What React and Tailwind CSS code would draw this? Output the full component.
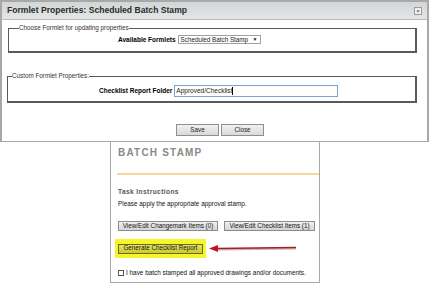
export default function App() {
    return (
        <div className="w-[429px] h-[283px] bg-white overflow-hidden font-['Liberation_Sans',Arial,sans-serif] text-black">
            {/* ventana de propiedades */}
            <div className="h-[142px] border-t-2 border-b border-x-2 border-[#a8a8a8] flex flex-col">
                <div className="h-[18px] shrink-0 bg-gradient-to-b from-[#d3d6d6] to-[#e3e6e6] border-b border-[#b9bcbc] flex items-center justify-between pl-[5px] pr-[5px]">
                    <span className="text-[8.6px] font-bold text-[#2b2b2b] leading-none">Formlet Properties: Scheduled Batch Stamp</span>
                    <span className="w-[8px] h-[8px] border border-[#9a9a9a] bg-[#f2f2f2] text-[6px] leading-[6px] text-center text-[#333]">×</span>
                </div>

                <div className="flex-1 pl-[5px] pr-[10px]">
                    <fieldset className="mt-[4px] ml-[1px] h-[29px] border border-[#5a5a5a] border-r-2 border-b-2 px-0">
                        <legend className="ml-[10px] text-[6.3px] leading-[8px] text-[#333]">Choose Formlet for updating properties</legend>
                        <div className="flex items-center pl-[109px] mt-[3px]">
                            <span className="text-[6.5px] font-bold mr-[2px]">Available Formlets</span>
                            <div className="w-[83px] h-[9px] border border-[#a0a0a0] flex items-center justify-between px-[2px] text-[6.3px] text-[#222]">
                                <span>Scheduled Batch Stamp</span>
                                <span className="text-[5px]">▼</span>
                            </div>
                        </div>
                    </fieldset>

                    <fieldset className="mt-[19px] h-[31px] border border-[#5a5a5a] border-r-2 border-b-2 px-0">
                        <legend className="ml-[4px] text-[6.3px] leading-[8px] text-[#333]">Custom Formlet Properties:</legend>
                        <div className="flex items-center pl-[91px] mt-[5px]">
                            <span className="text-[6.5px] font-bold mr-[2px]">Checklist Report Folder</span>
                            <div className="w-[164px] h-[12px] border border-[#7aa3d4] flex items-center px-[1px] text-[6.5px] text-[#222]">
                                Approved/Checklist<span className="w-px h-[8px] bg-black"></span>
                            </div>
                        </div>
                    </fieldset>

                    <div className="flex justify-center gap-[2px] mt-[21px] pl-[16px]">
                        <button className="w-[43px] h-[12px] border border-[#8f8f8f] bg-gradient-to-b from-[#f1f1f1] to-[#d9d9d9] text-[6.3px] leading-none text-[#222]">Save</button>
                        <button className="w-[43px] h-[12px] border border-[#8f8f8f] bg-gradient-to-b from-[#f1f1f1] to-[#d9d9d9] text-[6.3px] leading-none text-[#222]">Close</button>
                    </div>
                </div>
            </div>

            {/* panel batch stamp */}
            <div className="ml-[110px] w-[210px] h-[141px] border-x border-b border-[#a8a8a8] flex flex-col">
                <div className="pl-[7px] pt-[6px] text-[10px] font-bold tracking-[1.2px] text-[#8a8a8a] leading-none">BATCH STAMP</div>
                <div className="ml-[6px] mt-[15px] h-[2px] bg-[#f6d79a]"></div>

                <div className="pl-[7px] pt-[14px] text-[6.6px] font-bold tracking-[0.4px] text-[#555] leading-none">Task Instructions</div>
                <div className="pl-[7px] pt-[5px] text-[6.4px] text-[#111] leading-none">Please apply the appropriate approval stamp.</div>

                <div className="flex gap-[6px] pl-[7px] mt-[14px]">
                    <button className="w-[100px] h-[10px] border border-[#8c8c8c] bg-gradient-to-b from-[#f0f0f0] to-[#d4d4d4] text-[6.3px] leading-none text-[#111]">View/Edit Changemark Items (0)</button>
                    <button className="w-[91px] h-[10px] border border-[#8c8c8c] bg-gradient-to-b from-[#f0f0f0] to-[#d4d4d4] text-[6.3px] leading-none text-[#111]">View/Edit Checklist Items (1)</button>
                </div>

                <div className="flex items-center mt-[8px]">
                    <div className="ml-[4px] w-[91px] h-[19px] bg-[#f5f52a] flex items-center pl-[3px]">
                        <button className="w-[85px] h-[10px] border border-[#6b6b20] bg-gradient-to-b from-[#e6e65a] to-[#c9c930] text-[6.3px] leading-none text-[#111]">Generate Checklist Report</button>
                    </div>
                    <svg width="90" height="10" viewBox="0 0 90 10" className="ml-[2px]">
                        <line x1="8" y1="5.5" x2="88" y2="4.5" stroke="#b8b8b8" strokeWidth="2" />
                        <line x1="8" y1="4.5" x2="88" y2="3.5" stroke="#c0141c" strokeWidth="1.6" />
                        <polygon points="1,4.5 10,1 10,8" fill="#c0141c" />
                    </svg>
                </div>

                <div className="flex items-center pl-[7px] mt-[12px]">
                    <span className="w-[6px] h-[6px] border border-[#555] bg-white mr-[2px]"></span>
                    <span className="text-[6.4px] text-[#111] leading-none">I have batch stamped all approved drawings and/or documents.</span>
                </div>
            </div>
        </div>
    );
}
